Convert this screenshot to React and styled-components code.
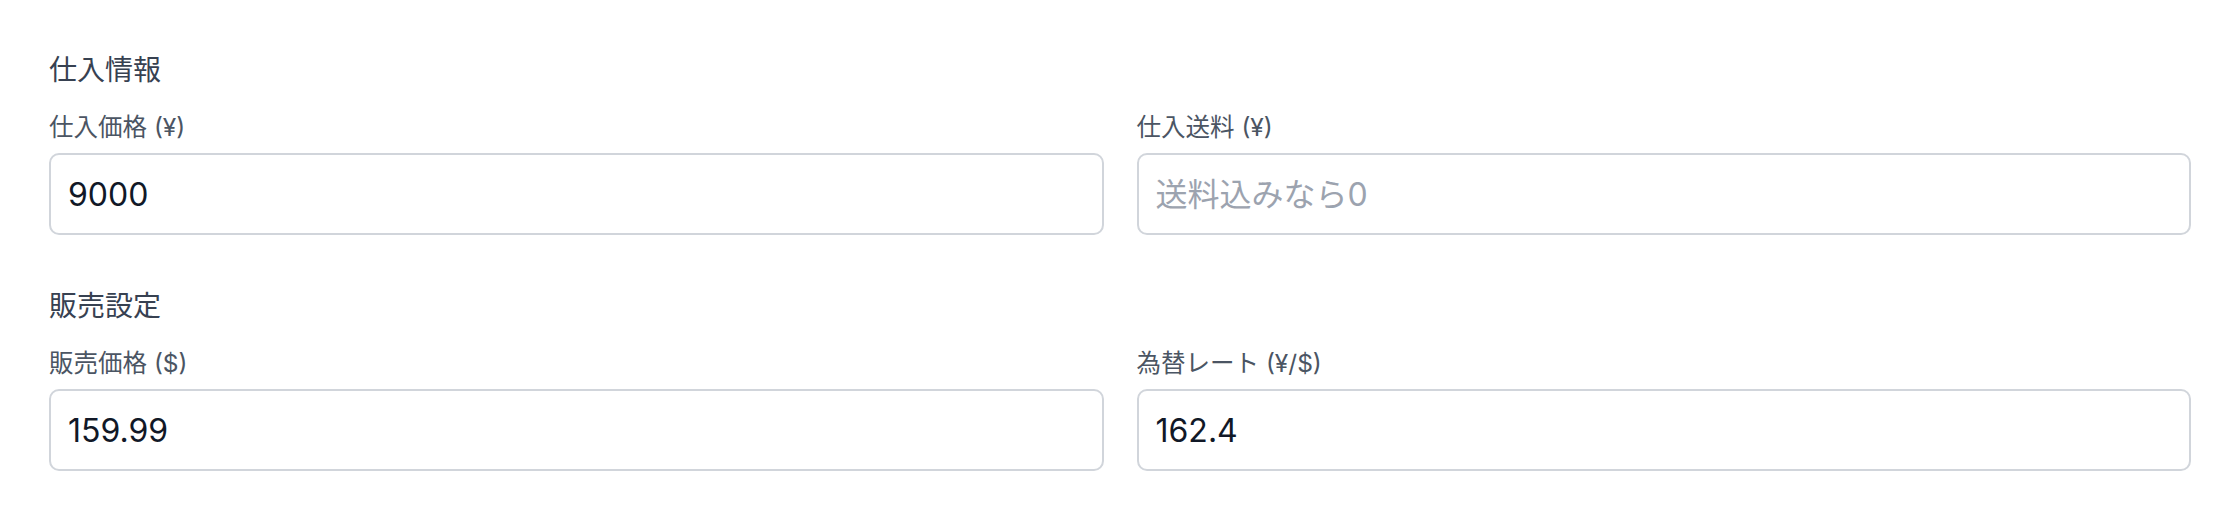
import React from 'react';
import styled, { createGlobalStyle } from 'styled-components';

const GlobalStyle = createGlobalStyle`
  html, body {
    margin: 0;
    padding: 0;
    background: #ffffff;
  }
  body {
    font-family: "Inter", "Noto Sans CJK JP", sans-serif;
  }
`;

const sections = [
  {
    id: 'purchase',
    title: '仕入情報',
    fields: [
      { id: 'cost', label: '仕入価格 (¥)', value: '9000' },
      { id: 'shipping', label: '仕入送料 (¥)', value: '', placeholder: '送料込みなら0' },
    ],
  },
  {
    id: 'sales',
    title: '販売設定',
    fields: [
      { id: 'price', label: '販売価格 ($)', value: '159.99' },
      { id: 'rate', label: '為替レート (¥/$)', value: '162.4' },
    ],
  },
];

const Field = ({ label, value, placeholder }) => {
  return (
    <FieldWrapper>
      <FieldLabel>{label}</FieldLabel>
      <FieldInput defaultValue={value} placeholder={placeholder} />
    </FieldWrapper>
  );
};

export default function App() {
  return (
    <>
      <GlobalStyle />
      <Page>
        {sections.map(section => (
          <Section key={section.id}>
            <SectionTitle>{section.title}</SectionTitle>
            <FieldGrid>
              {section.fields.map(field => (
                <Field key={field.id} {...field} />
              ))}
            </FieldGrid>
          </Section>
        ))}
      </Page>
    </>
  );
}

const Page = styled.main`
  padding: 49px 49px 0 49px;
  display: flex;
  flex-direction: column;
  gap: 50px;
`;

const Section = styled.section`
  display: flex;
  flex-direction: column;
  gap: 19px;
`;

const SectionTitle = styled.h3`
  margin: 0;
  font-size: 28px;
  line-height: 42px;
  font-weight: 400;
  color: #374151;
`;

const FieldGrid = styled.div`
  display: grid;
  grid-template-columns: 1fr 1fr;
  gap: 33px;
`;

const FieldWrapper = styled.div`
  display: flex;
  flex-direction: column;
  gap: 8px;
`;

const FieldLabel = styled.label`
  font-size: 24.5px;
  line-height: 35px;
  color: #4b5563;
`;

const FieldInput = styled.input`
  box-sizing: border-box;
  width: 100%;
  height: 82px;
  padding: 0 17px;
  border: 2px solid #d1d5db;
  border-radius: 10px;
  background: #ffffff;
  font-family: "Inter", "Noto Sans CJK JP", sans-serif;
  font-size: 32px;
  color: #111827;
  outline: none;

  &::placeholder {
    color: #9ca3af;
  }
`;
